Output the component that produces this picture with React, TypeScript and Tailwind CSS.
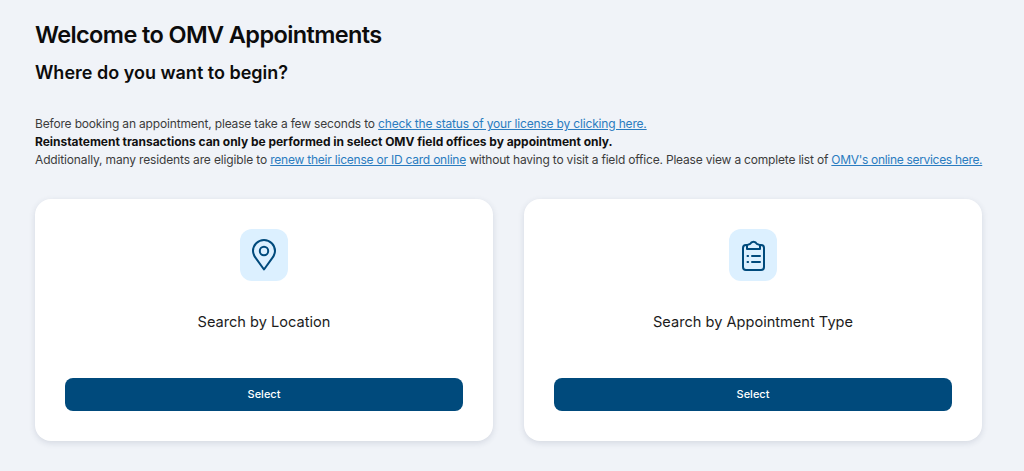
function PinIcon() {
  return (
    <svg width="24" height="32" viewBox="0 0 24 32" fill="none" stroke="#004a7c" strokeWidth="2" strokeLinecap="round" strokeLinejoin="round">
      <path d="M12 30.5 4 19.4C2.4 17.4 1 15 1 12a11 11 0 0 1 22 0c0 3-1.4 5.4-3 7.4Z" />
      <circle cx="12" cy="12" r="4.2" />
    </svg>
  );
}

function ClipboardIcon() {
  return (
    <svg width="23" height="32" viewBox="0 0 23 32" fill="none" stroke="#004a7c" strokeWidth="2" strokeLinecap="round" strokeLinejoin="round">
      <path d="M5 6H4a3 3 0 0 0-3 3v19a3 3 0 0 0 3 3h15a3 3 0 0 0 3-3V9a3 3 0 0 0-3-3h-1" />
      <path d="M5 10V6.2l3.2-1.4a3.6 3.6 0 0 1 6.6 0L18 6.2V10Z" />
      <path d="M10 17h8M10 23h8" />
      <path d="M5.5 17h.6M5.5 23h.6" />
    </svg>
  );
}

function SearchCard({ title, icon }: { title: string; icon: React.ReactNode }) {
  return (
    <div className="flex-1 h-[242px] bg-white rounded-2xl shadow-[0_2px_6px_rgba(40,60,90,0.14)] px-[30px] pt-[30px] flex flex-col items-center">
      <div className="w-12 h-[52px] rounded-xl bg-[#dcf0ff] flex items-center justify-center">
        {icon}
      </div>
      <h3 className="mt-[31px] text-[14.6px] leading-5 font-normal text-[#1c1c1c]">{title}</h3>
      <button className="mt-[46px] w-full h-[33px] rounded-lg bg-[#004a7c] text-white text-[11px] font-medium font-['Inter',sans-serif]">
        Select
      </button>
    </div>
  );
}

export default function App() {
  return (
    <div className="min-h-[471px] bg-[#f0f3f8] pl-[35px] pr-[42px] pt-[20px] font-['Inter','Noto_Sans',sans-serif]">
      <h1 className="text-[23.5px] leading-[30px] font-semibold text-[#0c0c0c] tracking-[-0.6px]">Welcome to OMV Appointments</h1>
      <h2 className="mt-[11px] text-[18px] leading-6 font-semibold text-[#0c0c0c]">Where do you want to begin?</h2>

      <p className="mt-[30px] text-[12px] leading-[18px] text-[#3c3c3c] tracking-[-0.17px] whitespace-nowrap">
        Before booking an appointment, please take a few seconds to{' '}
        <a href="#" className="text-[#2a7cc0] underline">check the status of your license by clicking here.</a>
        <br />
        <strong className="font-bold text-[#111111] tracking-[-0.03px]">Reinstatement transactions can only be performed in select OMV field offices by appointment only.</strong>
        <br />
        <span className="tracking-[-0.15px]">Additionally, many residents are eligible to </span>
        <a href="#" className="text-[#2a7cc0] underline tracking-[-0.22px]">renew their license or ID card online</a>
        <span className="tracking-[-0.19px]"> without having to visit a field office. Please view a complete list of </span>
        <a href="#" className="text-[#2a7cc0] underline tracking-[-0.31px]">OMV's online services here.</a>
      </p>

      <div className="mt-[30px] flex gap-[31px]">
        <SearchCard title="Search by Location" icon={<PinIcon />} />
        <SearchCard title="Search by Appointment Type" icon={<ClipboardIcon />} />
      </div>
    </div>
  );
}
